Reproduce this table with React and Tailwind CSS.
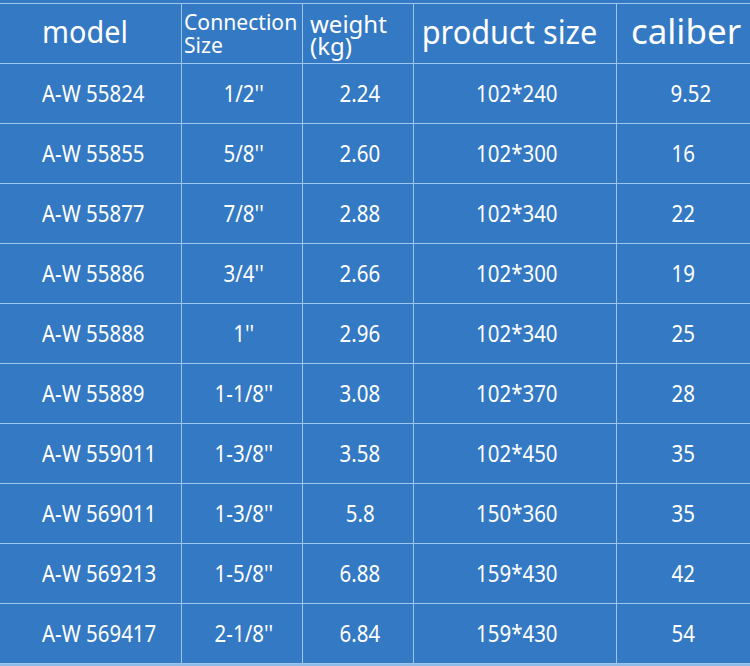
import React from "react";

const rows = [
  ["A-W 55824", "1/2''", "2.24", "102*240", "9.52"],
  ["A-W 55855", "5/8''", "2.60", "102*300", "16"],
  ["A-W 55877", "7/8''", "2.88", "102*340", "22"],
  ["A-W 55886", "3/4''", "2.66", "102*300", "19"],
  ["A-W 55888", "1''", "2.96", "102*340", "25"],
  ["A-W 55889", "1-1/8''", "3.08", "102*370", "28"],
  ["A-W 559011", "1-3/8''", "3.58", "102*450", "35"],
  ["A-W 569011", "1-3/8''", "5.8", "150*360", "35"],
  ["A-W 569213", "1-5/8''", "6.88", "159*430", "42"],
  ["A-W 569417", "2-1/8''", "6.84", "159*430", "54"],
];

const font = { fontFamily: "'Noto Sans', 'Open Sans', sans-serif" };

export default function App() {
  return (
    <div
      className="w-[750px] h-[666px] bg-[#3479c3] text-white overflow-hidden pt-[3px] flex flex-col"
      style={font}
    >
      <div className="border-t border-[#9cc6ee] grid grid-cols-[182px_121px_111px_203px_133px]">
        <div className="h-[60px] border-r border-b border-[#9cc6ee] flex items-center pl-[42px] text-[31px] leading-none pb-[4px]">
          <span className="inline-block scale-x-[0.93] origin-left">model</span>
        </div>
        <div className="h-[60px] border-r border-b border-[#9cc6ee] flex flex-col justify-center pl-[2px] text-[22px] leading-[23px] pb-[2px]">
          <span className="inline-block scale-x-[0.96] origin-left">Connection</span>
          <span className="inline-block scale-x-[0.96] origin-left">Size</span>
        </div>
        <div className="h-[60px] border-r border-b border-[#9cc6ee] flex flex-col justify-center pl-[7px] text-[24px] leading-[22px] pt-[2px]">
          <span>weight</span>
          <span>(kg)</span>
        </div>
        <div className="h-[60px] border-r border-b border-[#9cc6ee] flex items-center justify-center text-[32px] leading-none pb-[4px] pr-[12px]">
          <span className="inline-block scale-x-[0.96]">product size</span>
        </div>
        <div className="h-[60px] border-b border-[#9cc6ee] flex items-center justify-center text-[35px] leading-none pb-[6px] pl-[5px]">
          caliber
        </div>
        {rows.map((r, i) => (
          <React.Fragment key={i}>
            <div className="h-[60px] border-r border-b border-[#9cc6ee] flex items-center pl-[42px] text-[23px] leading-none">
              <span className="inline-block scale-x-[0.89] origin-left">{r[0]}</span>
            </div>
            <div className="h-[60px] border-r border-b border-[#9cc6ee] flex items-center justify-center text-[23px] leading-none pl-[3px]">
              <span className="inline-block scale-x-[0.89]">{r[1]}</span>
            </div>
            <div className="h-[60px] border-r border-b border-[#9cc6ee] flex items-center justify-center text-[23px] leading-none pl-[4px]">
              <span className="inline-block scale-x-[0.89]">{r[2]}</span>
            </div>
            <div className="h-[60px] border-r border-b border-[#9cc6ee] flex items-center justify-center text-[23px] leading-none pl-[4px]">
              <span className="inline-block scale-x-[0.89]">{r[3]}</span>
            </div>
            <div
              className={
                i === 0
                  ? "h-[60px] border-b border-[#9cc6ee] flex items-center justify-center text-[23px] leading-none pl-[14px]"
                  : "h-[60px] border-b border-[#9cc6ee] flex items-center justify-center text-[23px] leading-none"
              }
            >
              <span className="inline-block scale-x-[0.89]">{r[4]}</span>
            </div>
          </React.Fragment>
        ))}
      </div>
      <div className="flex-1 bg-[#8dbbe8]" />
    </div>
  );
}
